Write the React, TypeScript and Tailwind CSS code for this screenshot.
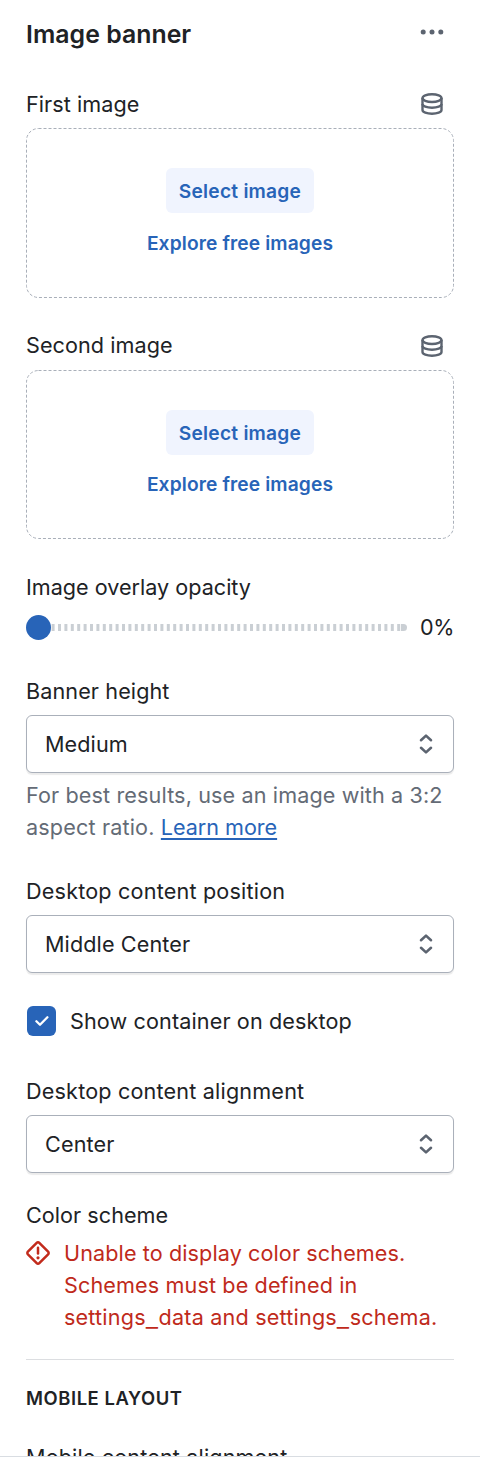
import React from 'react';

function DatabaseIcon() {
  return (
    <svg width="24" height="24" viewBox="0 0 24 24" fill="none" stroke="#5c6470" strokeWidth="2.4" className="mr-[10px]">
      <ellipse cx="12" cy="6.1" rx="9.5" ry="3.9" />
      <path d="M2.5 6v12c0 2.2 4.3 3.7 9.5 3.7s9.5-1.5 9.5-3.7V6" />
      <path d="M2.5 12c0 2.2 4.3 3.7 9.5 3.7s9.5-1.5 9.5-3.7" />
    </svg>
  );
}

function ImagePicker({ label, labelClass, boxClass, linkClass }: { label: string; labelClass: string; boxClass: string; linkClass: string }) {
  return (
    <section>
      <div className="flex h-8 items-center justify-between">
        <span className={labelClass}>{label}</span>
        <DatabaseIcon />
      </div>
      <div className={`relative mt-2 flex flex-col items-center pt-10 ${boxClass}`}>
        <svg className="absolute inset-0 h-full w-full" fill="none">
          <rect x="0.5" y="0.5" width="427" rx="12" stroke="#a9afb9" strokeDasharray="3 2" style={{ height: 'calc(100% - 1px)' }} />
        </svg>
        <button className="relative h-[45px] w-[148px] rounded-[6px] bg-[#f0f4fe] text-[19.2px] font-semibold tracking-[0.22px] text-[#2864b8]">Select image</button>
        <button className={`relative h-8 whitespace-nowrap text-[19.2px] font-semibold leading-8 tracking-[0.12px] text-[#2864b8] ${linkClass}`}>Explore free images</button>
      </div>
    </section>
  );
}

function Select({ label, value, labelClass, valueClass }: { label: string; value: string; labelClass: string; valueClass: string }) {
  return (
    <section>
      <div className={`h-8 ${labelClass}`}>{label}</div>
      <div className="mt-2 flex h-[58px] items-center justify-between rounded-[6px] border border-[#aab0ba] bg-white pr-[20px] pl-[18px] shadow-[0_1.5px_1px_rgba(0,0,0,0.08)]">
        <span className={valueClass}>{value}</span>
        <svg width="14" height="22" viewBox="0 0 14 22" fill="none" stroke="#5c6470" strokeWidth="2.6" strokeLinecap="round" strokeLinejoin="round">
          <path d="M2 7.2L7 2.6L12 7.2M2 14.8L7 19.4L12 14.8" />
        </svg>
      </div>
    </section>
  );
}

function Underscore() {
  return <span className="mx-[1.4px] inline-block translate-y-[1.5px] scale-x-[1.25]">_</span>;
}

export default function App() {
  return (
    <main className="h-[1460px] w-[480px] overflow-hidden bg-white font-['Inter',sans-serif] text-[21.6px] leading-8 whitespace-nowrap text-[#202225]">
      <div className="h-[1457px] overflow-hidden border-b border-[#d9dde2] px-[26px]">
        <header className="flex h-[88px] justify-between pt-[18px]">
          <h1 className="text-[24.8px] font-semibold tracking-[0.05px]">Image banner</h1>
          <svg width="24" height="6" viewBox="0 0 24 6" fill="#5c6470" className="mt-[11px] mr-[10px]">
            <circle cx="3.2" cy="3" r="2.5" />
            <circle cx="12" cy="3" r="2.5" />
            <circle cx="20.8" cy="3" r="2.5" />
          </svg>
        </header>

        <ImagePicker label="First image" labelClass="tracking-[0.07px]" boxClass="h-[170px]" linkClass="mt-[14px]" />
        <div className="h-8" />
        <ImagePicker label="Second image" labelClass="pb-[2px] tracking-[0.06px]" boxClass="h-[169px]" linkClass="mt-[13px]" />

        <section className="mt-8">
          <div className="h-8">Image overlay opacity</div>
          <div className="mt-2 flex h-8 items-center">
            <span className="z-10 size-[25px] shrink-0 rounded-full bg-[#2864b8]" />
            <svg width="356" height="7" className="shrink-0">
              {Array.from({ length: 55 }, (_, i) => (
                <rect key={i} x={0.6 + i * 6.4} y="0" width="3" height="7" fill="#cacfd4" />
              ))}
              <path d="M350 0h2.5a3.5 3.5 0 0 1 0 7H350z" fill="#cacfd4" />
            </svg>
            <span className="ml-auto tracking-[-0.4px]">0%</span>
          </div>
        </section>

        <div className="mt-8">
          <Select label="Banner height" value="Medium" labelClass="tracking-[0.1px]" valueClass="tracking-[0.1px]" />
        </div>
        <p className="mt-[6px] h-16 text-[#646b76]">
          <span className="tracking-[0.12px]">For best results, use an image with a 3:2</span>
          <br />
          <span className="tracking-[0.16px]">aspect ratio. </span>
          <a className="tracking-[-0.04px] text-[#2864b8] underline decoration-[1.6px] underline-offset-[3px]">Learn more</a>
        </p>

        <div className="mt-8">
          <Select label="Desktop content position" value="Middle Center" labelClass="tracking-[0.19px]" valueClass="tracking-[0.11px]" />
        </div>

        <label className="mt-8 flex h-8 items-center pl-px">
          <span className="flex h-[30px] w-[29px] items-center justify-center rounded-[6px] bg-[#2864b8]">
            <svg width="16" height="12" viewBox="0 0 16 12" fill="none" stroke="#fff" strokeWidth="2.3" strokeLinecap="round" strokeLinejoin="round">
              <path d="M2.4 6.2L6 9.8L13.4 2.2" />
            </svg>
          </span>
          <span className="ml-[14px] tracking-[0.12px]">Show container on desktop</span>
        </label>

        <div className="mt-[38px]">
          <Select label="Desktop content alignment" value="Center" labelClass="tracking-[0.18px]" valueClass="tracking-[0.15px]" />
        </div>

        <section className="mt-[26px]">
          <div className="h-8 tracking-[0.04px]">Color scheme</div>
          <div className="mt-[6px] flex text-[#bf2a1b]">
            <svg width="24" height="24" viewBox="0 0 24 24" fill="none" stroke="#c22b1c" strokeWidth="2.5" className="mt-1 mr-[14px] shrink-0">
              <path d="M10.7 1.9L1.9 10.7a1.8 1.8 0 0 0 0 2.6l8.8 8.8a1.8 1.8 0 0 0 2.6 0l8.8-8.8a1.8 1.8 0 0 0 0-2.6L13.3 1.9a1.8 1.8 0 0 0-2.6 0z" />
              <path d="M12 6.8v5.8" strokeLinecap="round" />
              <circle cx="12" cy="16.8" r="1.6" fill="#c22b1c" stroke="none" />
            </svg>
            <div>
              <div className="tracking-[0.1px]">Unable to display color schemes.</div>
              <div className="tracking-[0.12px]">Schemes must be defined in</div>
              <div className="tracking-[0.19px]">settings<Underscore />data and settings<Underscore />schema.</div>
            </div>
          </div>
        </section>

        <hr className="mt-[26px] border-[#dcdee1]" />
        <h2 className="mt-[22px] h-8 text-[18.4px] font-semibold tracking-[0.58px]">MOBILE LAYOUT</h2>
        <div className="mt-[27px] h-8 tracking-[0.14px]">Mobile content alignment</div>
      </div>
    </main>
  );
}
